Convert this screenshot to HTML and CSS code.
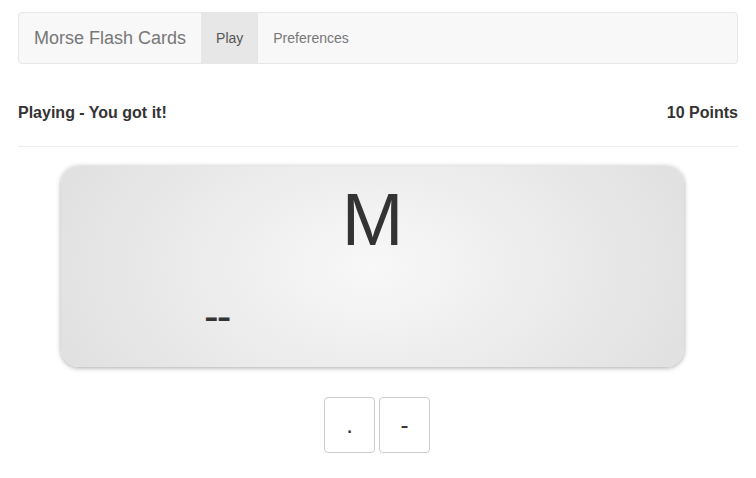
FILE: index.html
```html
<!DOCTYPE html>
<html>
<head>
<meta charset="utf-8">
<link rel="stylesheet" href="styles.css">
</head>
<body>
<div class="container">
  <nav class="navbar">
    <span class="brand">Morse Flash Cards</span>
    <a class="nav-link active">Play</a>
    <a class="nav-link">Preferences</a>
  </nav>
  <div class="status">
    <span>Playing - You got it!</span>
    <span>10 Points</span>
  </div>
  <hr class="rule">
  <div class="card">
    <div class="letter">M</div>
    <div class="code">--</div>
  </div>
  <div class="keys">
    <button class="key">.</button>
    <button class="key">-</button>
  </div>
</div>
</body>
</html>
```
FILE: styles.css
```css
* { box-sizing: border-box; }
html, body { margin: 0; padding: 0; background: #fff; }
body {
  font-family: "Liberation Sans", Arial, Helvetica, sans-serif;
  font-size: 14px;
  color: #333;
}
.container { padding: 12px 18px 0; }
.navbar {
  display: flex;
  align-items: stretch;
  height: 52px;
  background: #f8f8f8;
  border: 1px solid #e7e7e7;
  border-radius: 4px;
}
.brand {
  padding: 15px;
  font-size: 18px;
  line-height: 20px;
  color: #777;
}
.nav-link {
  padding: 15px;
  line-height: 20px;
  color: #777;
  font-size: 14px;
}
.nav-link.active { background: #e7e7e7; color: #555; }
.status {
  display: flex;
  justify-content: space-between;
  font-size: 16px;
  font-weight: bold;
  line-height: 20px;
  margin-top: 39px;
}
.rule {
  border: 0;
  border-top: 1px solid #eee;
  margin: 23px 0 19px;
}
.card {
  margin-left: 43px;
  width: 623px;
  height: 201px;
  border-radius: 18px;
  background: radial-gradient(ellipse 330px 210px at 50% 50%, #f8f8f8 0%, #e1e1e1 100%);
  box-shadow: 0 1px 5px rgba(0, 0, 0, 0.35);
  display: flex;
  flex-direction: column;
}
.letter {
  text-align: center;
  font-size: 74px;
  line-height: 74px;
  margin-top: 17px;
  color: #333;
}
.code {
  padding-left: 143px;
  font-size: 44px;
  line-height: 44px;
  margin-top: 37px;
  color: #333;
  letter-spacing: -2px;
}
.keys {
  display: flex;
  justify-content: center;
  gap: 4px;
  margin-top: 30px;
  padding-right: 2px;
}
.key {
  width: 51px;
  height: 56px;
  border: 1px solid #ccc;
  border-radius: 4px;
  background: #fff;
  color: #333;
  font-family: "Liberation Sans", Arial, sans-serif;
  font-size: 24px;
  padding: 0;
}
```
